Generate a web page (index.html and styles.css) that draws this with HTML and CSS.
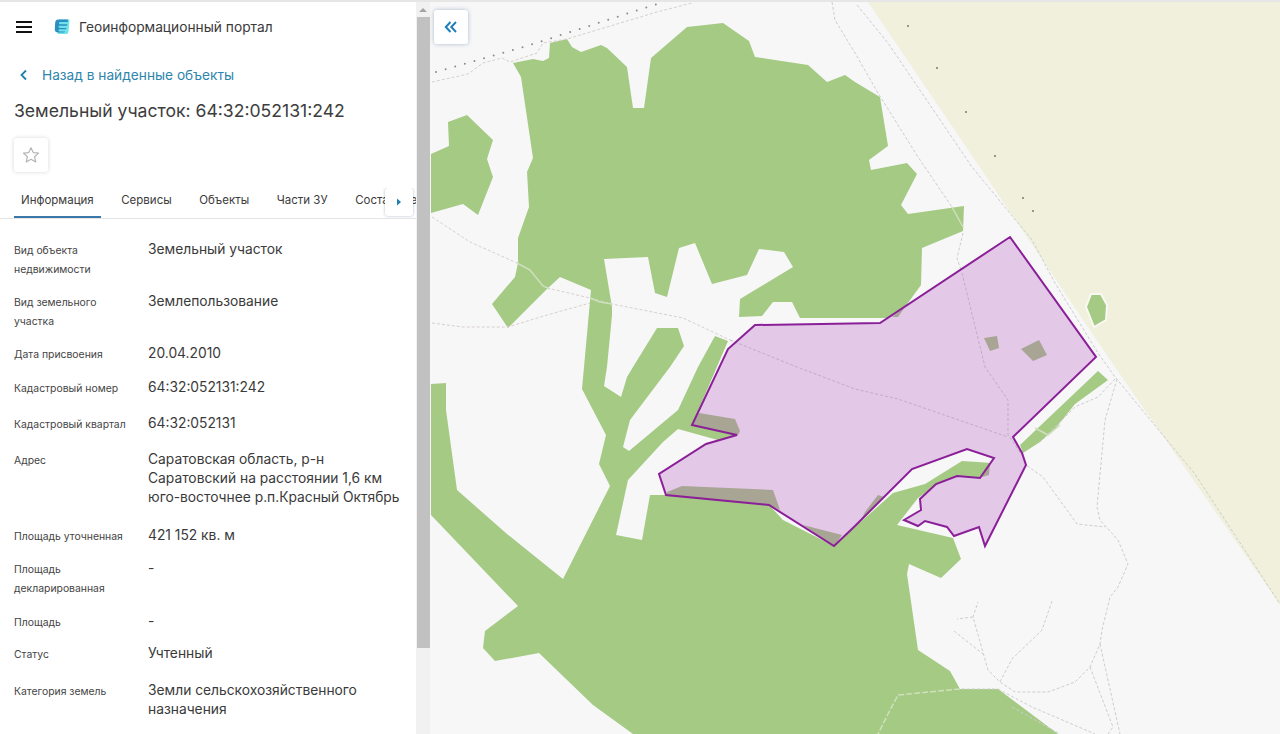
FILE: index.html
```html
<!DOCTYPE html>
<html lang="ru">
<head>
    <meta charset="UTF-8">
    <meta name="viewport" content="width=device-width, initial-scale=1.0">
    <title>Геоинформационный портал</title>
    <link rel="stylesheet" href="styles.css">
</head>
<body>
    <div class="top-strip"></div>
    <div class="layout">
        <aside class="sidebar">
            <div class="panel">
                <header class="header">
                    <button class="menu-button" aria-label="Меню">
                        <span></span><span></span><span></span>
                    </button>
                    <svg class="logo" viewBox="0 0 18 18" aria-hidden="true">
                        <path d="M6 1.500h10.500l-1 12c-.2 1.600-1.200 2.600-2.800 2.600H4.500z" fill="#6fe3ea"/>
                        <path d="M5.500 1.500h8.500c.8 0 1.200.5 1 1.200l-.3 1.300H7.500c-1 0-1.500.5-1.500 1.200s.5 1.100 1.400 1.100h6.900l-.3 1.400H7c-.9 0-1.400.5-1.400 1.100s.5 1.100 1.400 1.100h6.400l-.3 1.400H6.800c-.9 0-1.300.4-1.300 1s.5 1.100 1.300 1.100h5.400c-.3.700-.9 1.100-1.700 1.100H5c-2 0-3.300-1.300-3.200-3.300l.3-5.800c.1-2.600 1.300-4 3.400-3.900z" fill="#2c8fc0"/>
                    </svg>
                    <span class="portal-title">Геоинформационный портал</span>
                </header>

                <a class="back-link" href="#">
                    <svg viewBox="0 0 10 12" aria-hidden="true"><path d="M7 1.500 2.500 6 7 10.500" fill="none" stroke="#1f7fae" stroke-width="1.800"/></svg>
                    Назад в найденные объекты
                </a>
                <h1 class="object-title">Земельный участок: 64:32:052131:242</h1>

                <button class="favorite-button" aria-label="В избранное">
                    <svg viewBox="0 0 24 24" aria-hidden="true"><path d="M12 3.200l2.700 5.900 6.400.7-4.800 4.300 1.400 6.300-5.700-3.300-5.700 3.300 1.400-6.300-4.800-4.300 6.400-.7z" fill="none" stroke="#b4b4b4" stroke-width="1.400" stroke-linejoin="round"/></svg>
                </button>

                <nav class="tabs">
                    <a class="tab active" href="#">Информация</a>
                    <a class="tab" href="#">Сервисы</a>
                    <a class="tab" href="#">Объекты</a>
                    <a class="tab" href="#">Части ЗУ</a>
                    <a class="tab" href="#">Составные части</a>
                    <button class="tabs-next" aria-label="Дальше">
                        <svg viewBox="0 0 6 8" aria-hidden="true"><path d="M1 .5 5 4 1 7.500z" fill="#1f7fae"/></svg>
                    </button>
                </nav>

                <dl class="info">
                    <dt>Вид объекта недвижимости</dt>
                    <dd>Земельный участок</dd>
                    <dt>Вид земельного участка</dt>
                    <dd>Землепользование</dd>
                    <dt>Дата присвоения</dt>
                    <dd>20.04.2010</dd>
                    <dt>Кадастровый номер</dt>
                    <dd>64:32:052131:242</dd>
                    <dt>Кадастровый квартал</dt>
                    <dd>64:32:052131</dd>
                    <dt>Адрес</dt>
                    <dd>Саратовская область, р-н Саратовский на расстоянии 1,6 км юго-восточнее р.п.Красный Октябрь</dd>
                    <dt>Площадь уточненная</dt>
                    <dd>421 152 кв. м</dd>
                    <dt>Площадь декларированная</dt>
                    <dd>-</dd>
                    <dt>Площадь</dt>
                    <dd>-</dd>
                    <dt>Статус</dt>
                    <dd>Учтенный</dd>
                    <dt>Категория земель</dt>
                    <dd>Земли сельскохозяйственного назначения</dd>
                </dl>
            </div>
            <div class="scrollbar">
                <div class="scrollbar-arrow"></div>
                <div class="scrollbar-thumb"></div>
            </div>
        </aside>

        <main class="map">
            <svg class="map-canvas" viewBox="430 2 850 732" preserveAspectRatio="none" aria-label="Карта">
                <polygon class="steppe" points="868,2 1280,2 1280,605 1115,367"/>

                <polygon class="forest" points="513,63 533,59 543,61 549,58 550,43 567,39 572,47 581,52 601,45 607,48 627,67 633,108 644,108 651,58 687,27 723,23 749,41 755,57 808,65 827,82 845,75 855,82 880,97 888,146 869,160 871,170 907,163 917,174 901,205 908,214 964,206 963,231 922,248 921,285 905,307 892,318 800,318 792,302 773,302 762,316 739,317 740,299 793,267 784,252 759,249 747,275 712,284 695,243 679,248 667,297 655,293 648,257 604,259 612,307 612,315 607,367 604,386 621,397 627,377 633,367 657,328 678,328 684,346 670,367 630,420 623,447 629,451 678,410 698,367 715,336 728,341 692,425 738,435 725,442 678,429 663,442 628,480 616,535 642,540 650,495 666,495 769,505 783,520 834,546 855,527 893,493 925,484 962,461 992,463 980,478 958,476 937,484 918,498 897,525 953,538 961,559 941,578 909,564 907,574 918,650 950,671 960,689 998,689 1058,734 633,734 593,705 539,653 495,661 483,648 485,631 518,606 431,515 431,384 446,383 446,410 457,490 507,534 563,579 610,486 599,464 606,435 582,389 584,367 591,290 560,277 547,289 508,328 492,304 515,277 518,263 518,238 529,207 527,172 533,158 521,77"/>
                <polygon class="forest" points="431,154 449,146 448,122 467,115 493,140 487,159 493,177 478,215 463,204 431,213"/>
                <polygon class="forest" points="1020,445 1098,371 1108,380 1075,404 1055,429 1040,442 1023,453"/>
                <polygon class="forest forest-halo" points="1091,294 1101,294 1107,305 1106,320 1094,327 1086,307"/>

                <polyline class="trail" points="432,82 468,74 483,63 502,58 510,62 537,53 543,43 567,39 597,30 657,12 692,3"/>
                <polyline class="trail" points="432,217 470,242 517,263"/>
                <polyline class="trail" points="547,288 590,298 612,304 683,318 730,340"/>
                <polyline class="trail" points="432,323 463,327 508,327 547,315 590,303"/>
                <polyline class="trail-forest" points="517,263 530,270 543,286 550,289"/>
                <polyline class="trail-forest" points="590,298 600,302 612,304"/>
                <polyline class="trail-forest" points="952,207 963,227"/>
                <polyline class="trail-forest" points="1035,428 1048,435 1060,425"/>
                <polyline class="trail-forest trail-dashed" points="960,689 898,695 888,714 878,734"/>
                <polyline class="fence" points="436,72 530,45 657,4"/>

                <g class="trail-gray">
                    <polyline points="832,2 835,20 855,53 878,93 918,157 952,207"/>
                    <polyline points="963,233 957,258 962,273 985,367 1008,400 1008,435 1022,455 1026,465 1043,477 1077,524 1105,527"/>
                    <polyline points="857,5 888,43 972,167 1032,240 1055,283 1098,353 1115,377 1195,474 1280,604"/>
                    <polyline points="1117,379 1105,420 1097,507 1100,520 1118,540 1128,564 1118,587 1110,597 1102,630 1100,644 1090,667 1075,682 1048,692 1015,692 1000,682 988,670 973,617 978,602"/>
                    <polyline points="1115,379 1098,397 1075,407 1058,424 1040,442"/>
                    <polyline points="973,617 957,619"/>
                    <polyline points="954,631 983,654"/>
                    <polyline points="1052,601 1042,630 1012,659 1000,682"/>
                    <polyline points="1100,644 1120,734"/>
                    <polyline points="1090,667 1113,727 1108,734"/>
                    <polyline points="998,689 1032,707 1095,734"/>
                    <polyline points="1012,707 1060,734"/>
                    <polyline points="962,689 998,689"/>
                </g>
                <g class="dots">
                    <circle cx="908" cy="26" r="1"/>
                    <circle cx="937" cy="68" r="1"/>
                    <circle cx="966" cy="112" r="1"/>
                    <circle cx="995" cy="156" r="1"/>
                    <circle cx="1023" cy="198" r="1"/>
                    <circle cx="1033" cy="211" r="1"/>
                </g>

                <polygon class="parcel" points="755,325 880,323 1010,237 1096,357 1013,437 1022,453 1026,465 985,546 979,527 954,536 947,527 925,521 918,526 904,520 921,510 920,499 936,484 957,476 980,478 994,458 967,449 912,469 855,526 834,546 769,505 666,495 659,474 706,444 737,435 692,425 728,349"/>
                <g class="shade">
                    <polygon points="699,413 735,419 740,431 738,435 692,425"/>
                    <polygon points="667,492 682,486 773,490 780,510 768,505 666,496"/>
                    <polygon points="803,525 842,535 834,546"/>
                    <polygon points="865,512 878,495 884,497 860,522"/>
                    <polygon points="905,307 898,317 892,317"/>
                    <polygon points="984,338 997,336 999,348 990,351"/>
                    <polygon points="1021,349 1039,340 1047,355 1033,361"/>
                    <polygon points="990,463 989,475 982,477"/>
                </g>
                <g class="trail-parcel">
                    <polyline points="730,340 797,367 855,389 898,399 1008,437"/>
                    <polyline points="962,273 985,367 1008,400 1008,435 1022,455"/>
                </g>
                <polygon class="parcel-line" points="755,325 880,323 1010,237 1096,357 1013,437 1022,453 1026,465 985,546 979,527 954,536 947,527 925,521 918,526 904,520 921,510 920,499 936,484 957,476 980,478 994,458 967,449 912,469 855,526 834,546 769,505 666,495 659,474 706,444 737,435 692,425 728,349"/>
            </svg>
            <button class="collapse-button" aria-label="Свернуть">
                <svg viewBox="0 0 14 14" aria-hidden="true"><path d="M6.500 2 1.800 7l4.700 5M12 2 7.300 7l4.700 5" fill="none" stroke="#1f7fb8" stroke-width="2"/></svg>
            </button>
        </main>
    </div>
</body>
</html>
```

FILE: styles.css
```css
* {
    box-sizing: border-box;
}
html, body {
    height: 100%;
}
body {
    margin: 0;
    display: flex;
    flex-direction: column;
    overflow: hidden;
    font-family: 'Inter', 'Liberation Sans', sans-serif;
    color: #333;
    background-color: #fff;
}
button {
    padding: 0;
    border: none;
    background: none;
    cursor: pointer;
}
.top-strip {
    flex: none;
    height: 2px;
    background-color: #e6e6e6;
}
.layout {
    flex: 1;
    display: flex;
    min-height: 0;
}
.sidebar {
    flex: none;
    width: 430px;
    display: flex;
}
.panel {
    flex: 1;
    min-width: 0;
    overflow: hidden;
}
.header {
    display: flex;
    align-items: center;
    height: 49px;
    padding-left: 16px;
}
.menu-button {
    display: flex;
    flex-direction: column;
    gap: 3px;
    width: 16px;
    margin-right: 21px;
}
.menu-button span {
    height: 2px;
    background-color: #111;
}
.logo {
    width: 18px;
    height: 18px;
    margin-right: 8px;
}
.portal-title {
    font-size: 13.750px;
    color: #3a3a3a;
}
.back-link {
    display: flex;
    align-items: center;
    height: 20px;
    margin-top: 14px;
    padding-left: 19px;
    font-size: 13.700px;
    color: #2f86ad;
    text-decoration: none;
}
.back-link svg {
    width: 10px;
    height: 12px;
    margin-right: 13px;
}
.object-title {
    margin: 14px 0 0 14px;
    font-size: 17.600px;
    line-height: 24px;
    font-weight: 400;
    color: #3d3d3d;
    white-space: nowrap;
}
.favorite-button {
    display: flex;
    align-items: center;
    justify-content: center;
    width: 34px;
    height: 34px;
    margin: 15px 0 0 14px;
    border-radius: 3px;
    background-color: #fff;
    box-shadow: 0 0 4px rgba(0, 0, 0, 0.16);
}
.favorite-button svg {
    width: 20px;
    height: 20px;
}
.tabs {
    position: relative;
    display: flex;
    gap: 13.500px;
    height: 31px;
    margin-top: 16px;
    padding-left: 14px;
    border-bottom: 1px solid #e4e4e4;
    overflow: hidden;
}
.tab {
    flex: none;
    height: 30px;
    padding: 0 7px;
    font-size: 11.500px;
    line-height: 24px;
    color: #3c3c3c;
    text-decoration: none;
}
.tab.active {
    border-bottom: 2px solid #3b78a8;
}
.tabs-next {
    position: absolute;
    top: 0;
    left: 385px;
    display: flex;
    align-items: center;
    justify-content: center;
    width: 28px;
    height: 28px;
    border-radius: 3px;
    background-color: #fff;
    box-shadow: 0 0 3px rgba(60, 90, 130, 0.4);
}
.tabs-next svg {
    width: 6px;
    height: 8px;
}
.info {
    display: grid;
    grid-template-columns: 134px 1fr;
    grid-template-rows: 52px 52px 34px 36px 36px 76px 33px 53px 32px 37px auto;
    margin: 21px 0 0;
    padding: 0 14px;
}
.info dt {
    margin-top: 1px;
    padding-right: 14px;
    font-size: 10.400px;
    line-height: 19px;
    color: #444;
}
.info dd {
    margin: 0;
    font-size: 13.800px;
    line-height: 19px;
    color: #3a3a3a;
}
.scrollbar {
    flex: none;
    width: 14px;
    display: flex;
    flex-direction: column;
    align-items: center;
    background-color: #f1f1f1;
}
.scrollbar-arrow {
    width: 0;
    height: 0;
    margin: 6px 0 5px;
    border-left: 4px solid transparent;
    border-right: 4px solid transparent;
    border-bottom: 4px solid #a5a5a5;
}
.scrollbar-thumb {
    width: 100%;
    height: 631px;
    margin-left: 2px;
    background-color: #c1c1c1;
}
.map {
    flex: 1;
    position: relative;
    min-width: 0;
    background-color: #f7f7f8;
}
.map-canvas {
    display: block;
    width: 100%;
    height: 100%;
}
.steppe {
    fill: #f0f0dd;
}
.forest {
    fill: #a5ca84;
}
.forest-halo {
    stroke: #f9f9f4;
    stroke-width: 2;
}
.trail, .trail-forest, .trail-gray polyline, .trail-parcel polyline {
    fill: none;
    stroke-width: 1;
    stroke-dasharray: 3 2;
}
.trail {
    stroke: #d8d0cc;
}
.trail-forest {
    stroke: #cfe0bd;
    stroke-width: 1.500;
    stroke-dasharray: none;
}
.trail-forest.trail-dashed {
    stroke-dasharray: 6 2;
}
.trail-gray polyline {
    stroke: #cdcdcf;
}
.trail-parcel polyline {
    stroke: #c0adc6;
}
.fence {
    fill: none;
    stroke: #8d8d8d;
    stroke-width: 2;
    stroke-linecap: round;
    stroke-dasharray: 0 10;
}
.dots {
    fill: #777;
}
.parcel {
    fill: #e3c8e8;
}
.shade {
    fill: #a8a594;
}
.parcel-line {
    fill: none;
    stroke: #8a1f98;
    stroke-width: 2;
    stroke-linejoin: miter;
}
.collapse-button {
    position: absolute;
    top: 8px;
    left: 4px;
    display: flex;
    align-items: center;
    justify-content: center;
    width: 34px;
    height: 34px;
    border-radius: 3px;
    background-color: #fff;
    box-shadow: 0 0 4px rgba(60, 90, 130, 0.4);
}
.collapse-button svg {
    width: 14px;
    height: 14px;
}
```
